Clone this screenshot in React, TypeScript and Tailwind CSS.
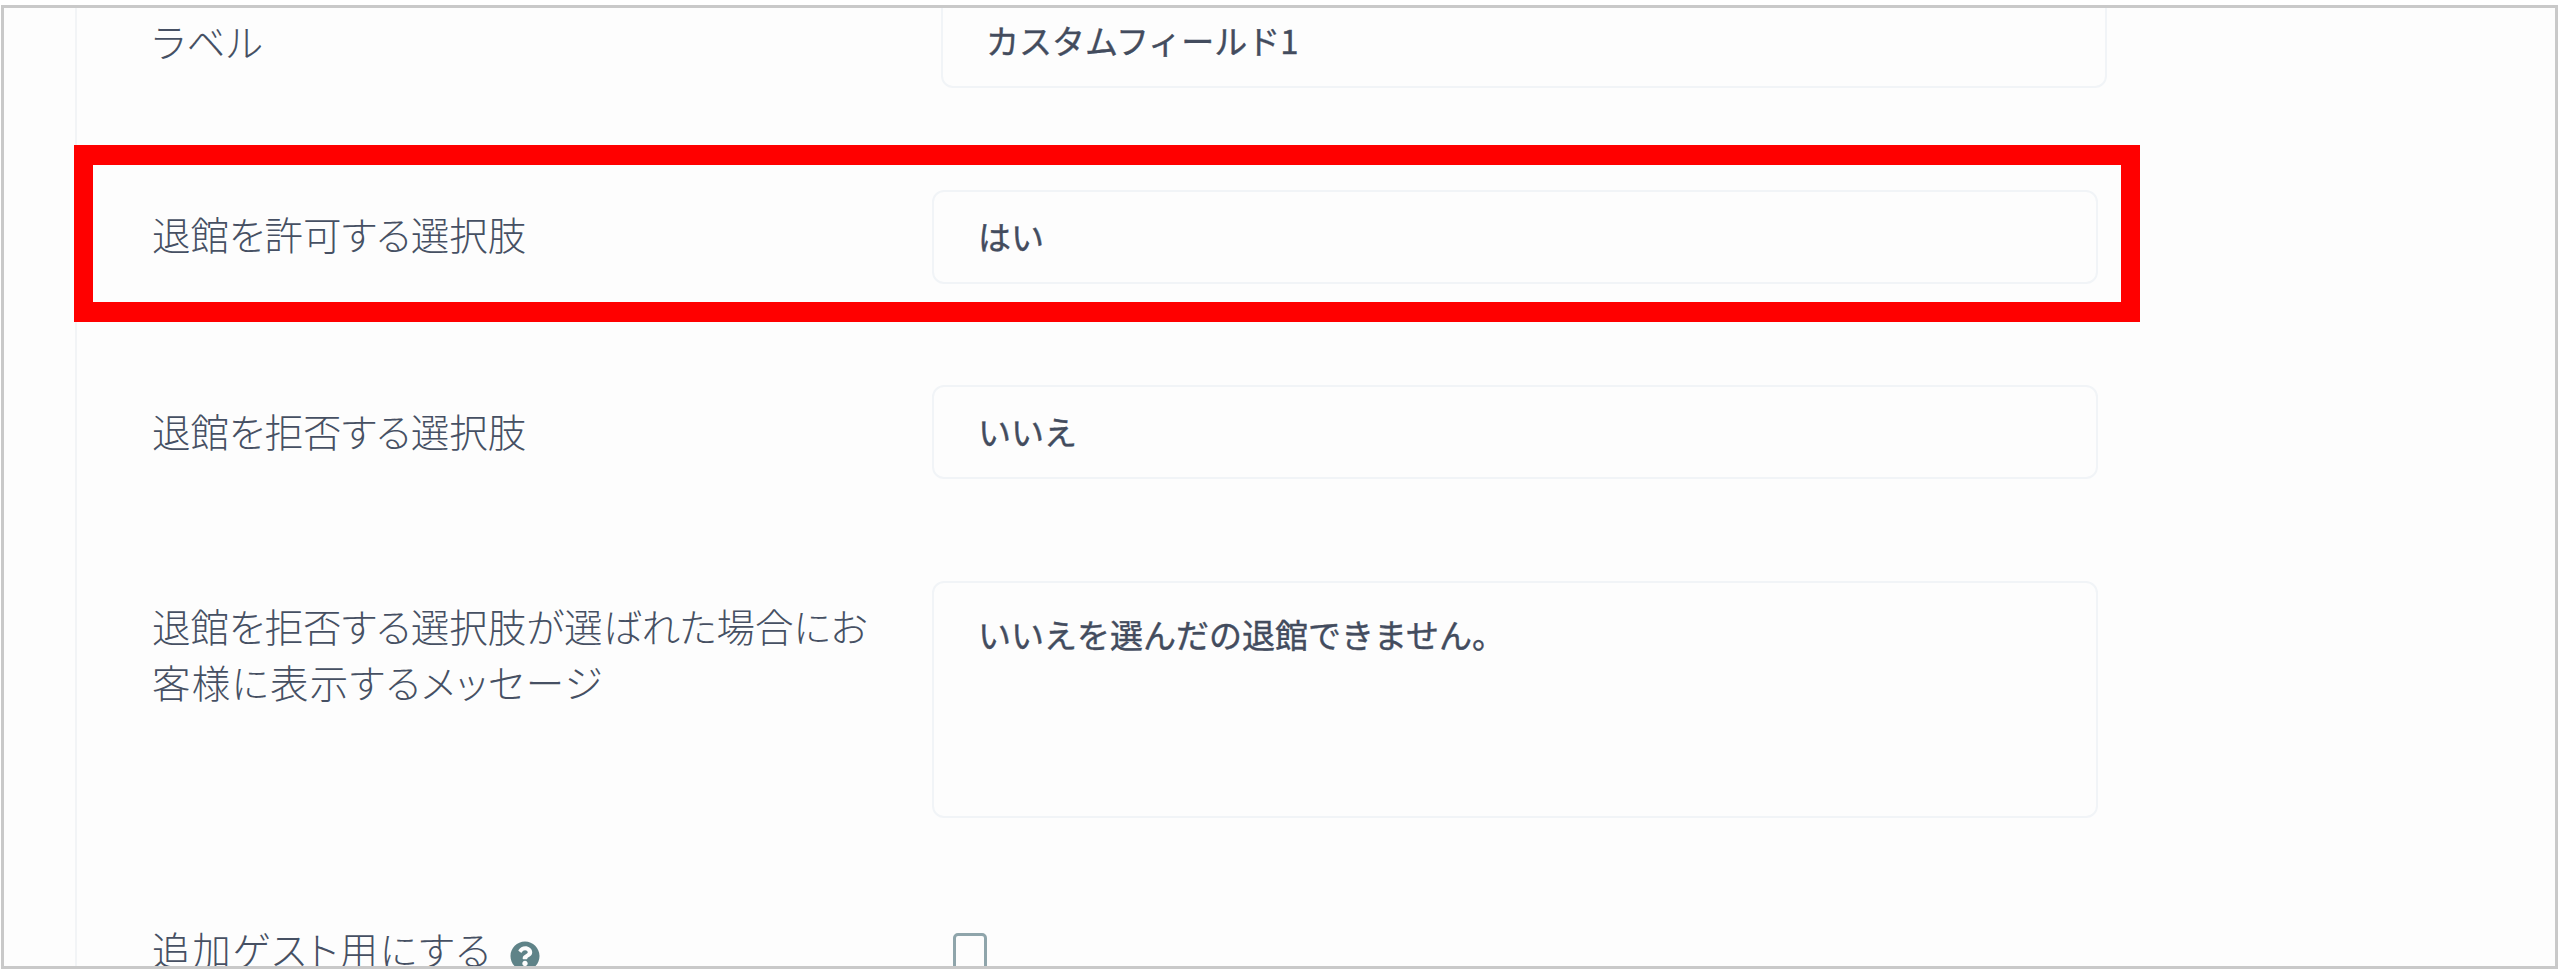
import { FaQuestionCircle } from "react-icons/fa"

const font = "font-['Noto_Sans_CJK_JP','Noto_Sans',sans-serif]"
const labelText = "text-[38.5px] font-light text-[#465063] [font-feature-settings:'palt']"

function Field({ value, className }: { value: string; className: string }) {
  return (
    <div className={`rounded-[12px] border-2 border-[#f1f4f7] bg-[#fdfdfd] pl-[44px] text-[33px] font-normal text-[#434c5e] [-webkit-text-stroke:0.4px_#434c5e] ${className}`}>
      {value}
    </div>
  )
}

export default function App() {
  return (
    <div className={`h-[971px] w-[2560px] overflow-hidden bg-white pt-[5px] pl-[1px] pr-[2px] ${font}`}>
      <div className="h-[964px] overflow-hidden border-[3px] border-[#c9c9c9] bg-[#fdfdfd]">
        <div className="ml-[71px] flow-root h-full border-l-2 border-[#f2f4f6]">
          {/* ラベル */}
          <div className="-mt-[14px] flex items-center pl-[75px]">
            <label className={`w-[789px] tracking-[1px] ${labelText}`}>ラベル</label>
            <Field value="カスタムフィールド1" className="flex h-[94px] w-[1166px] items-center !pl-[43px]" />
          </div>

          {/* highlighted row */}
          <div className="-ml-[3px] mt-[57px] flex h-[177px] w-[2066px] items-center border-x-[19px] border-y-[20px] border-[#ff0000] pl-[59px]">
            <label className={`w-[780px] ${labelText}`}>退館を許可する選択肢</label>
            <Field value="はい" className="mt-[7px] flex h-[94px] w-[1166px] items-center" />
          </div>

          <div className="mt-[63px] flex items-center pl-[75px]">
            <label className={`-mt-[2px] w-[780px] ${labelText}`}>退館を拒否する選択肢</label>
            <Field value="いいえ" className="flex h-[94px] w-[1166px] items-center" />
          </div>

          <div className="mt-[102px] flex items-start pl-[75px]">
            <label className={`mt-[16px] w-[780px] pr-[30px] leading-[56px] ${labelText}`}>
              退館を拒否する選択肢が選ばれた場合にお<span className="tracking-[1.3px]">客様に表示するメッセージ</span>
            </label>
            <Field value="いいえを選んだの退館できません。" className="h-[237px] w-[1166px] pt-[27px]" />
          </div>

          <div className="mt-[115px] flex items-start pl-[75px]">
            <div className={`-mt-[11px] flex w-[801px] items-start gap-[18px] leading-[52px] ${labelText}`}>
              <span className="tracking-[1.8px]">追加ゲスト用にする</span>
              <FaQuestionCircle className="mt-[19px] h-[30px] w-[30px] shrink-0 text-[#5f8388]" />
            </div>
            <div className="h-[50px] w-[34px] rounded-[5px] border-[3px] border-[#8fa5ab]" />
          </div>
        </div>
      </div>
    </div>
  )
}
